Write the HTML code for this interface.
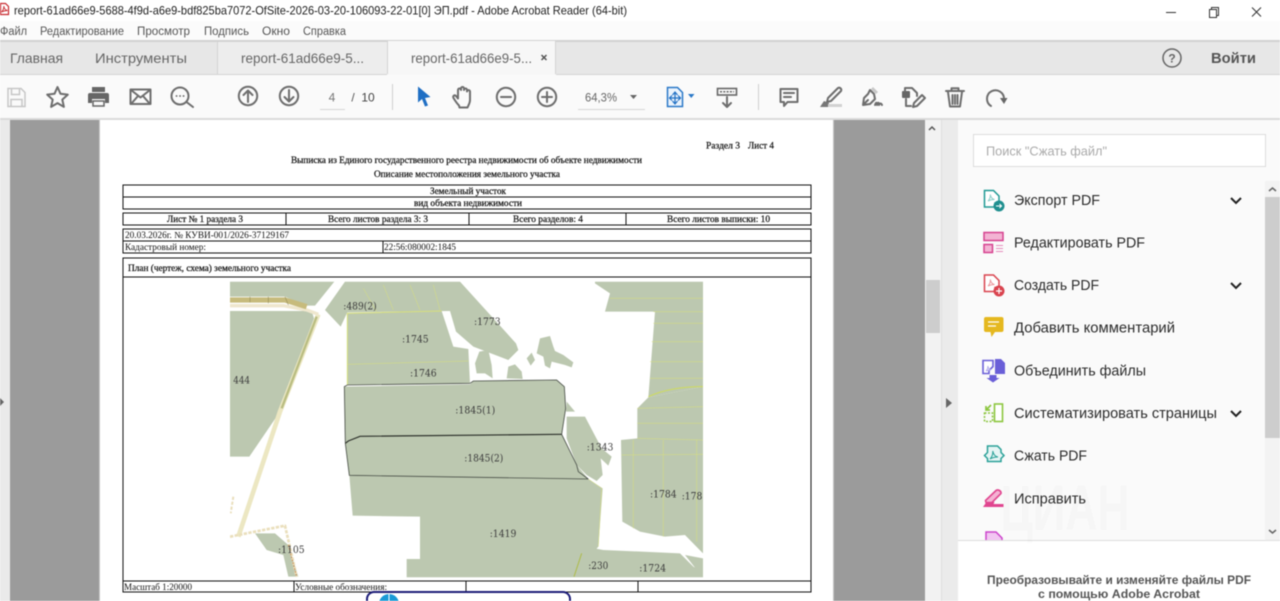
<!DOCTYPE html>
<html lang="ru">
<head>
<meta charset="utf-8">
<title>Adobe Acrobat Reader</title>
<style>
html,body{margin:0;padding:0;width:1280px;height:601px;overflow:hidden;background:#fff}
svg{display:block;filter:blur(.4px)}
text{font-family:"Liberation Sans","DejaVu Sans",sans-serif}
.ui{font-size:14px;fill:#666}
.menu{font-size:11.5px;fill:#555}
.side{font-size:14.5px;fill:#2c2c2c}
.p{font-family:"Liberation Serif","DejaVu Serif",serif;font-size:9px;fill:#111}
.b{stroke:#111;stroke-width:.22px}
.m{font-family:"DejaVu Serif","Liberation Serif",serif;font-size:10.5px;fill:#3c3c3c}
.ic{fill:none;stroke:#6e6e6e;stroke-width:2;stroke-linejoin:round;stroke-linecap:round}
.tb{fill:none;stroke:#111;stroke-width:1}
</style>
</head>
<body>
<svg width="1280" height="601" viewBox="0 0 1280 601" xmlns="http://www.w3.org/2000/svg">
<defs>
<clipPath id="mapc"><rect x="30" y="20" width="1419" height="887"/></clipPath>
<clipPath id="listc"><rect x="960" y="170" width="305" height="370"/></clipPath>
</defs>

<!-- chrome -->
<rect width="1280" height="21" fill="#fff"/>
<rect y="21" width="1280" height="19" fill="#fbfbfb"/>
<rect y="40" width="1280" height="2" fill="#d2d2d2"/>
<rect y="42" width="1280" height="32" fill="#e7e7e7"/>
<rect x="218" y="42" width="169" height="32" fill="#ededed"/>
<rect x="217" y="42" width="1" height="32" fill="#d4d4d4"/>
<rect x="387" y="41" width="169" height="34" fill="#f7f7f7"/>
<rect x="387" y="41" width="1" height="33" fill="#d4d4d4"/>
<rect x="555" y="41" width="1" height="33" fill="#d4d4d4"/>
<rect y="74" width="387" height="1" fill="#d4d4d4"/>
<rect x="556" y="74" width="724" height="1" fill="#d4d4d4"/>
<rect y="75" width="1280" height="43" fill="#fafafa"/>
<rect y="118" width="1280" height="2" fill="#dadada"/>

<!-- title bar -->
<path d="M0.5 3.500h5l3 3v8h-8z" fill="#fff" stroke="#c8282e" stroke-width="1.200"/>
<path d="M1.500 12c2-2 2.500-4 2.300-6 .3 2.500 1.500 4 3.700 4.500-2 0-4 .5-6 1.500z" fill="none" stroke="#c8282e" stroke-width=".9"/>
<text x="14" y="14.500" font-size="12" fill="#222" textLength="613" lengthAdjust="spacingAndGlyphs">report-61ad66e9-5688-4f9d-a6e9-bdf825ba7072-OfSite-2026-03-20-106093-22-01[0] ЭП.pdf - Adobe Acrobat Reader (64-bit)</text>
<rect x="1166" y="12" width="10" height="1" fill="#333"/>
<path d="M1209.500 9.500h7v8h-7zM1211.500 9.500v-2h7v8h-2" fill="#fff" stroke="#333" stroke-width="1"/>
<path d="M1252 7.500l9 9M1261 7.500l-9 9" stroke="#333" stroke-width="1" fill="none"/>

<!-- menu -->
<text class="menu" x="0" y="35" textLength="27" lengthAdjust="spacingAndGlyphs">Файл</text>
<text class="menu" x="40" y="35" textLength="84" lengthAdjust="spacingAndGlyphs">Редактирование</text>
<text class="menu" x="137" y="35" textLength="53" lengthAdjust="spacingAndGlyphs">Просмотр</text>
<text class="menu" x="204" y="35" textLength="45" lengthAdjust="spacingAndGlyphs">Подпись</text>
<text class="menu" x="262" y="35" textLength="28" lengthAdjust="spacingAndGlyphs">Окно</text>
<text class="menu" x="303" y="35" textLength="43" lengthAdjust="spacingAndGlyphs">Справка</text>

<!-- tabs -->
<text class="ui" x="10" y="63" textLength="53" lengthAdjust="spacingAndGlyphs">Главная</text>
<text class="ui" x="95" y="63" textLength="92" lengthAdjust="spacingAndGlyphs">Инструменты</text>
<text class="ui" x="241" y="63" textLength="123" lengthAdjust="spacingAndGlyphs">report-61ad66e9-5...</text>
<text class="ui" x="411" y="63" textLength="121" lengthAdjust="spacingAndGlyphs">report-61ad66e9-5...</text>
<path d="M541.500 55l5 5M546.500 55l-5 5" stroke="#555" stroke-width="1.500"/>
<circle cx="1172" cy="58" r="9" fill="none" stroke="#666" stroke-width="1.500"/>
<text x="1172" y="62.500" font-size="12" font-weight="bold" fill="#666" text-anchor="middle">?</text>
<text x="1211" y="63" font-size="15" font-weight="bold" fill="#555" textLength="45" lengthAdjust="spacingAndGlyphs">Войти</text>

<!-- toolbar left -->
<path d="M8 88.500h13l4 4v14H8zM11.500 88.500v6h8v-6M11 106.500v-7h11v7" fill="none" stroke="#c6c6c6" stroke-width="1.500"/>
<path class="ic" stroke-width="1.800" d="M57.500 87l3 6.800 7.300.8-5.500 5 1.600 7.300-6.400-3.800-6.400 3.800 1.600-7.300-5.500-5 7.300-.8z"/>
<path fill="#666" d="M92 87h13v5H92zM90 93h17a2 2 0 0 1 2 2v8h-4v-4H92v4h-4v-8a2 2 0 0 1 2-2z"/>
<rect x="93" y="101" width="11" height="5" fill="none" stroke="#666" stroke-width="1.500"/>
<rect x="130.500" y="89.500" width="20" height="14.500" class="ic" stroke-width="1.600"/>
<path class="ic" stroke-width="1.300" d="M131 90l9.500 7.500L150 90M131 104l7-8M150 104l-7-8"/>
<circle cx="180" cy="96" r="8.500" class="ic"/>
<path class="ic" stroke-width="2.400" d="M186.500 102l6.500 5"/>
<path d="M176.500 96h.1M180 96h.1M183.500 96h.1" stroke="#666" stroke-width="1.800" stroke-linecap="round"/>

<circle cx="248" cy="96" r="9.200" class="ic"/>
<path class="ic" d="M248 102v-11M243.500 95l4.500-4.500 4.500 4.500"/>
<circle cx="289" cy="96" r="9.200" class="ic"/>
<path class="ic" d="M289 90v11M284.500 97l4.500 4.500 4.500-4.500"/>
<text x="332" y="101.500" font-size="12" fill="#777" text-anchor="middle">4</text>
<rect x="320" y="109" width="25" height="1" fill="#d6d6d6"/>
<text x="353" y="101.500" font-size="12" fill="#555" text-anchor="middle">/</text>
<text x="368" y="101.500" font-size="12" fill="#444" text-anchor="middle">10</text>
<rect x="392" y="84" width="1" height="26" fill="#cfcfcf"/>

<path fill="#1f6fc4" d="M418 86.500l12.500 10.500-5.500 1 3 7.500-3 1-3-7.500-4 3.500z"/>
<path class="ic" stroke-width="1.600" d="M459 105.500c-2-2-4-5-5.500-7.500-1-2 1-3.500 2.500-2l2 2.500V90c0-2 3-2 3 0v-1.500c0-2 3-2 3 0V90c0-2 3-2 3 0v1.500c0-1.800 3-1.800 3 0V100c0 3-1.500 5-2.500 7.500h-8z"/>
<circle cx="506" cy="97" r="9.200" class="ic"/><path class="ic" d="M501 97h10"/>
<circle cx="547" cy="97" r="9.200" class="ic"/><path class="ic" d="M542 97h10M547 92v10"/>
<text x="585" y="101.500" font-size="12" fill="#666" textLength="32" lengthAdjust="spacingAndGlyphs">64,3%</text>
<path d="M630 95h7l-3.500 4z" fill="#666"/>
<rect x="578" y="109" width="67" height="1" fill="#d6d6d6"/>

<!-- toolbar right -->
<path d="M667.500 87.500h10l5 5v14h-15z" fill="#eaf3fc" stroke="#2a78c8" stroke-width="1.500"/>
<path d="M675 92v12M670 98h10M672.500 95l2.500-3 2.500 3M672.500 101l2.500 3 2.500-3M672 95.500l-2.500 2.500 2.500 2.500M678 95.500l2.500 2.500-2.500 2.500" fill="none" stroke="#1f6fc4" stroke-width="1.200"/>
<path d="M688 94h6.500l-3.250 4z" fill="#2a78c8"/>
<rect x="717.500" y="88.500" width="19" height="6.500" fill="none" stroke="#666" stroke-width="1.600"/>
<path d="M720 91.800h14" stroke="#666" stroke-width="1.500" stroke-dasharray="2 1.300"/>
<path class="ic" d="M727 97v9.500M723 103l4 4 4-4"/>
<rect x="758" y="84" width="1" height="26" fill="#cfcfcf"/>
<path class="ic" stroke-width="1.700" d="M780.500 89h17v13h-10l-3.500 4v-4h-3.500z"/>
<path class="ic" stroke-width="1.300" d="M784 93h10M784 97h7"/>
<path class="ic" stroke-width="1.600" d="M838 88c2-1 4 1 3 3l-10 10-4 1 1-4z"/>
<path fill="#777" d="M820 107l4-6 5 2-1 4z"/>
<rect x="828" y="104" width="14" height="3" fill="#d2d2d2"/>
<path class="ic" stroke-width="1.600" d="M870 90l4 4 1 5-5 5-7 1 1-7 4-4zM864 104l4-4"/>
<path d="M873 87l5 5-2 2-5-5z" fill="#c8c8c8"/>
<path class="ic" stroke-width="1.200" d="M875 105c1-3 2-3 2 0 1-3 2-3 2 0 1-2 2-2 3 0"/>
<rect x="902" y="91" width="8" height="7" rx="1" fill="#666"/>
<path class="ic" stroke-width="1.600" d="M905 91v-3h7l5 5v3M906 99v7h5"/>
<path class="ic" stroke-width="1.600" d="M913 107l1-4 8-8 3 3-8 8z"/>
<path class="ic" stroke-width="1.700" d="M948 92l2 14.500h10l2-14.500M946 91h18M951.500 91v-2.800h7V91"/>
<path class="ic" stroke-width="1.100" d="M952.500 95v9M955 95v9M957.500 95v9"/>
<path class="ic" stroke-width="2.200" d="M991 106A8.500 8.500 0 1 1 1004 99"/>
<path d="M1000 98h7.500l-3.500 6z" fill="#666"/>

<!-- document area -->
<rect y="120" width="1280" height="481" fill="#fff"/>
<rect x="0" y="120" width="10" height="481" fill="#eaeaea"/>
<path d="M0 398v8l4-4z" fill="#666"/>
<rect x="10" y="120" width="89" height="481" fill="#9b9b9b"/>
<rect x="99" y="120" width="1" height="481" fill="#c6c6c6"/>
<rect x="100" y="120" width="733" height="481" fill="#fff"/>
<rect x="833" y="120" width="92" height="481" fill="#9b9b9b"/>
<rect x="833" y="120" width="1" height="481" fill="#c4c4c4"/>
<rect x="925" y="120" width="16" height="481" fill="#f2f2f2"/>
<rect x="941" y="120" width="17" height="481" fill="#ebebeb"/>
<rect x="941" y="120" width="1" height="481" fill="#dedede"/>
<rect x="926" y="280" width="14" height="53" fill="#cdcdcd"/>
<path d="M929 130l3-3 3 3" fill="none" stroke="#555" stroke-width="1.500"/>
<path d="M946 398v10l6-5z" fill="#666"/>

<!-- pdf header text -->
<text class="p b" x="706" y="148.500" textLength="34" lengthAdjust="spacingAndGlyphs">Раздел 3</text>
<text class="p b" x="748" y="148.500" textLength="26" lengthAdjust="spacingAndGlyphs">Лист 4</text>
<text class="p b" x="291" y="163" textLength="351" lengthAdjust="spacingAndGlyphs">Выписка из Единого государственного реестра недвижимости об объекте недвижимости</text>
<text class="p b" x="374" y="177" textLength="186" lengthAdjust="spacingAndGlyphs">Описание местоположения земельного участка</text>

<!-- tables -->
<g class="tb" shape-rendering="crispEdges">
<rect x="123" y="185" width="688" height="24"/>
<path d="M123 197h688"/>
<rect x="123" y="213" width="688" height="12"/>
<path d="M286 213v12M469 213v12M626 213v12"/>
<rect x="123" y="229" width="688" height="24"/>
<path d="M123 241h688M383 241v12"/>
<rect x="123" y="258" width="688" height="334"/>
<path d="M123 277h688M123 581h688M294 581v11M466 581v11M638 581v11"/>
</g>
<text class="p b" x="430" y="194" textLength="76" lengthAdjust="spacingAndGlyphs">Земельный участок</text>
<text class="p b" x="414" y="206" textLength="108" lengthAdjust="spacingAndGlyphs">вид объекта недвижимости</text>
<text class="p b" x="167" y="222" textLength="76" lengthAdjust="spacingAndGlyphs">Лист № 1 раздела 3</text>
<text class="p b" x="328" y="222" textLength="100" lengthAdjust="spacingAndGlyphs">Всего листов раздела 3: 3</text>
<text class="p b" x="513" y="222" textLength="70" lengthAdjust="spacingAndGlyphs">Всего разделов: 4</text>
<text class="p b" x="667" y="222" textLength="103" lengthAdjust="spacingAndGlyphs">Всего листов выписки: 10</text>
<text class="p" x="125" y="238" textLength="164" lengthAdjust="spacingAndGlyphs">20.03.2026г. № КУВИ-001/2026-37129167</text>
<text class="p" x="125" y="250" textLength="81" lengthAdjust="spacingAndGlyphs">Кадастровый номер:</text>
<text class="p" x="384" y="250" textLength="72" lengthAdjust="spacingAndGlyphs">22:56:080002:1845</text>
<text class="p b" x="128" y="271" textLength="163" lengthAdjust="spacingAndGlyphs">План (чертеж, схема) земельного участка</text>
<text class="p" x="124" y="590" textLength="68" lengthAdjust="spacingAndGlyphs">Масштаб 1:20000</text>
<text class="p" x="295" y="590" textLength="92" lengthAdjust="spacingAndGlyphs">Условные обозначения:</text>

<!-- map -->
<g transform="translate(220 275) scale(.33333)" clip-path="url(#mapc)">
<g fill="#bcc8b0">
<path d="M30 20H343L285 92 255 92 195 65H30z"/>
<path d="M30 108H275L282 130 180 410 88 545H30z"/>
<path d="M375 20H720L888 205 895 225 865 255 760 215 708 170 690 108 382 112 362 155 315 105z"/>
<path d="M382 115L665 108 700 215 745 222 750 325 382 330z"/>
<path d="M373 335L750 328 760 318 1010 315 1033 335 1037 400 1025 478 420 484 376 505z"/>
<path d="M376 505L420 484 1025 478 1070 570 1105 612 388 601z"/>
<path d="M388 601L1105 612 1148 640 1135 815 1060 907H560V852H600V725L398 722z"/>
<path d="M1040 425L1095 425 1145 520 1175 545 1165 572 1142 550 1148 600 1130 618 1100 600 1070 570 1040 490z"/>
<path d="M1040 380L1065 410H1038z"/>
<path d="M765 265L778 230 805 225 815 270 818 310 795 295 770 295z"/>
<path d="M860 310L865 275 885 268 905 290 908 312z"/>
<path d="M920 250L935 233 945 255 932 272z"/>
<path d="M950 235L960 190 990 183 1000 215 1005 228 1030 240 1060 262 1055 277 1035 270 995 260 990 280 975 272 970 245z"/>
<path d="M1125 20H1449V335L1285 367 1305 110H1155L1170 55 1125 25z"/>
<path d="M1285 367L1449 335V835L1395 780 1335 785 1260 770 1207 740 1203 495 1252 490V400z"/>
<path d="M1060 907L1095 815 1150 825 1380 835 1420 875 1425 878 1395 840 1449 850V907z"/>
<path d="M105 775H165L205 810 235 905H205L190 840 140 825z"/>
</g>
<g fill="none" stroke="#d8e07c" stroke-width="1.500">
<path d="M382 330V115L665 108" stroke-width="3"/>
<path d="M382 268L745 258"/>
<path d="M1285 365C1340 340 1400 335 1449 335" stroke="#cfdc5c" stroke-width="3"/>
<path d="M1252 400L1449 395M1252 445L1449 445M1252 490L1449 495M1205 540L1449 538M1240 495V760M1330 495V785M1430 495V800M1300 110H1449M1300 145H1449M1295 200H1449M1290 260H1449M1290 310H1449M1170 70H1449"/>
<path d="M1135 815L1145 640 1105 612"/>
<path d="M430 40L470 110M490 30L520 105M570 30L600 105M640 30L660 105"/>
</g>
<path d="M1062 905L1085 835" stroke="#aebc48" stroke-width="3" fill="none"/>
<g fill="none" stroke-linejoin="round">
<path d="M295 118L180 410 55 785" stroke="#ece7c2" stroke-width="14"/>
<path d="M290 125L185 400" stroke="#b9bd82" stroke-width="7"/>
<path d="M30 92H190L260 105 295 118" stroke="#efe7ce" stroke-width="10"/>
<path d="M30 75H195L260 95" stroke="#c7bb7c" stroke-width="16"/>
<path d="M30 785L195 752 230 905" stroke="#eadfbc" stroke-width="8" stroke-dasharray="10 4"/>
<path d="M205 810L230 905" stroke="#c98a55" stroke-width="3" stroke-dasharray="5 4"/>
<path d="M40 665L32 715" stroke="#eadfbc" stroke-width="6" stroke-dasharray="10 5"/>
<path d="M90 65V82M145 65V85M195 65L205 90" stroke="#8a8450" stroke-width="1.500"/>
</g>
<g fill="none" stroke="#4a5048" stroke-width="2.500">
<path d="M750 325L382 330 373 335 376 505 388 601 1105 612M750 325L760 318 1010 315 1033 335 1037 400 1025 478 1070 570 1075 590 1105 612"/>
</g>
<path d="M376 505L385 498 420 484 1025 478" fill="none" stroke="#2c302a" stroke-width="3.500"/>
</g>
<g>
<text class="m" x="343.300" y="309.300" textLength="33.400" lengthAdjust="spacingAndGlyphs">:489(2)</text>
<text class="m" x="474" y="325" textLength="26.700" lengthAdjust="spacingAndGlyphs">:1773</text>
<text class="m" x="402" y="342.300" textLength="26.700" lengthAdjust="spacingAndGlyphs">:1745</text>
<text class="m" x="410" y="376.300" textLength="26.700" lengthAdjust="spacingAndGlyphs">:1746</text>
<text class="m" x="233.300" y="383.300" textLength="16.700" lengthAdjust="spacingAndGlyphs">444</text>
<text class="m" x="455.300" y="413.700" textLength="40" lengthAdjust="spacingAndGlyphs">:1845(1)</text>
<text class="m" x="464.300" y="461.300" textLength="39" lengthAdjust="spacingAndGlyphs">:1845(2)</text>
<text class="m" x="586.700" y="450.300" textLength="26.700" lengthAdjust="spacingAndGlyphs">:1343</text>
<text class="m" x="650" y="497.700" textLength="26.700" lengthAdjust="spacingAndGlyphs">:1784</text>
<text class="m" x="681.700" y="499.300" textLength="20.600" lengthAdjust="spacingAndGlyphs">:178</text>
<text class="m" x="489.700" y="537" textLength="26.700" lengthAdjust="spacingAndGlyphs">:1419</text>
<text class="m" x="278" y="553" textLength="26.700" lengthAdjust="spacingAndGlyphs">:1105</text>
<text class="m" x="588.300" y="569" textLength="20" lengthAdjust="spacingAndGlyphs">:230</text>
<text class="m" x="639.300" y="571.700" textLength="26.700" lengthAdjust="spacingAndGlyphs">:1724</text>
</g>
<!-- stamp -->
<path d="M367 602v-3a7 7 0 0 1 7-7h189a7 7 0 0 1 7 7v3" fill="#fff" stroke="#1c1c78" stroke-width="2"/>
<circle cx="389" cy="604" r="10" fill="#1a9ad6"/>
<path d="M389 594v10" stroke="#fff" stroke-width="1"/>

<!-- right panel -->
<rect x="958" y="120" width="322" height="481" fill="#fafafa"/>
<rect x="973.500" y="134.500" width="292" height="32" fill="#fff" stroke="#dcdcdc"/>
<text x="986" y="155.500" font-size="13" fill="#aaa" textLength="121" lengthAdjust="spacingAndGlyphs">Поиск "Сжать файл"</text>
<rect x="1265" y="181" width="15" height="359" fill="#f3f3f3"/>
<rect x="1265" y="197" width="15" height="241" fill="#cdcdcd"/>
<path d="M1269 191l3.500-3 3.500 3M1269 530l3.500 3 3.500-3" fill="none" stroke="#666" stroke-width="1.500"/>

<g clip-path="url(#listc)">
<text class="side" x="1014" y="205" textLength="86" lengthAdjust="spacingAndGlyphs">Экспорт PDF</text>
<text class="side" x="1014" y="247.500" textLength="131" lengthAdjust="spacingAndGlyphs">Редактировать PDF</text>
<text class="side" x="1014" y="290" textLength="85" lengthAdjust="spacingAndGlyphs">Создать PDF</text>
<text class="side" x="1014" y="332.500" textLength="161" lengthAdjust="spacingAndGlyphs">Добавить комментарий</text>
<text class="side" x="1014" y="375.500" textLength="132" lengthAdjust="spacingAndGlyphs">Объединить файлы</text>
<text class="side" x="1014" y="418" textLength="203" lengthAdjust="spacingAndGlyphs">Систематизировать страницы</text>
<text class="side" x="1014" y="460.500" textLength="73" lengthAdjust="spacingAndGlyphs">Сжать PDF</text>
<text class="side" x="1014" y="503.500" textLength="72" lengthAdjust="spacingAndGlyphs">Исправить</text>
<text class="side" x="1014" y="550" textLength="60" lengthAdjust="spacingAndGlyphs">Формы</text>
<!-- icon: export -->
<path d="M984.500 190.500h9l5.500 5.500v7h-4v4h-10.500z" fill="#fff" stroke="#1f9a94" stroke-width="1.500"/>
<path d="M988 201c2-2 2.500-4 2.300-6.500.4 2.500 1.700 4.500 4.200 5-2.300 0-4.500.5-6.500 1.500z" fill="none" stroke="#8ccfca" stroke-width="1"/>
<circle cx="999" cy="206" r="5.500" fill="#1f8f8f"/><path d="M996 206h5M999.500 204l2 2-2 2" stroke="#fff" fill="none" stroke-width="1.100"/>
<!-- icon: edit -->
<rect x="984" y="232.500" width="19" height="8" fill="#f3b3d3" stroke="#d6428f" stroke-width="1.500"/>
<rect x="984" y="244.500" width="8.500" height="8" fill="#f3b3d3" stroke="#d6428f" stroke-width="1.500"/>
<path d="M996 245.500h7M996 248.500h7M996 251.500h7" stroke="#e58cbc" stroke-width="1"/>
<!-- icon: create -->
<path d="M984.500 275h9l5.500 5.500v7h-4v4h-10.500z" fill="#fff" stroke="#d9434e" stroke-width="1.500"/>
<path d="M988 286c2-2 2.500-4 2.300-6.500.4 2.500 1.700 4.500 4.200 5-2.300 0-4.500.5-6.500 1.500z" fill="none" stroke="#eb9aa0" stroke-width="1"/>
<circle cx="999" cy="291" r="5.500" fill="#d9434e"/><path d="M996 291h6M999 288v6" stroke="#fff" stroke-width="1.200"/>
<!-- icon: comment -->
<path d="M986 317h15.500a2 2 0 0 1 2 2v11a2 2 0 0 1-2 2H995l-3.500 5-1-5H986a2 2 0 0 1-2-2v-11a2 2 0 0 1 2-2z" fill="#e5b81f"/>
<path d="M988 322h11M988 326h8" stroke="#fff" stroke-width="1.300"/>
<!-- icon: combine -->
<path d="M983 360.500h10v6l-4 4v3h-6z" fill="#fff" stroke="#6a5fd8" stroke-width="1.600"/>
<path d="M986 371c1.500-1.500 2-3 1.800-5 .4 2 1.300 3.500 3.200 4-1.800 0-3.500.3-5 1z" fill="none" stroke="#b3adec" stroke-width="1"/>
<path d="M995 359h6l4 4v11h-10z" fill="#6a5fd8"/>
<path d="M989.500 375h7v3h3l-6.500 4.500-6.500-4.500h3z" fill="#6a5fd8"/>
<!-- icon: organize -->
<rect x="994.500" y="404" width="8" height="17.500" fill="#fff" stroke="#8cc63f" stroke-width="1.600"/>
<rect x="984.500" y="413" width="8" height="8.500" fill="none" stroke="#8cc63f" stroke-width="1.500" stroke-dasharray="2 1.500"/>
<path d="M991 405l-5 5M986 406v4h4" fill="none" stroke="#8cc63f" stroke-width="1.700"/>
<!-- icon: compress -->
<path d="M987.500 446h10l3.500 3.500v3l3 3-3 3v3h-13.500v-3l-3-3 3-3z" fill="#e6f5f4" stroke="#2aa198" stroke-width="1.500"/>
<path d="M990 459c2.500-2.500 3-5 2.800-8 .5 3 2 5.500 5.200 6-3 0-5.500.5-8 2z" fill="none" stroke="#2aa198" stroke-width="1"/>
<!-- icon: fix -->
<path d="M996 490.500c2-1.500 5.500 .5 5 3l-9 9h-6l-.5-2z" fill="#f4b3d3" stroke="#e0458f" stroke-width="1.600"/>
<path d="M983 507l3.500-5h8l-1 2h10v3z" fill="#e0458f"/>
<!-- icon: fill -->
<path d="M986 532h10l6 6v8h-16z" fill="#f2c6f2" stroke="#cc44cc" stroke-width="1.500"/>
</g>
<path d="M1231 198l5 5 5-5M1231 283l5 5 5-5M1231 411l5 5 5-5" fill="none" stroke="#222" stroke-width="2"/>

<!-- bottom promo -->
<rect x="958" y="540" width="322" height="1" fill="#dedede"/>
<rect x="958" y="541" width="322" height="60" fill="#fff"/>
<text x="1119" y="584" font-size="11.500" font-weight="bold" fill="#555" text-anchor="middle" textLength="264" lengthAdjust="spacingAndGlyphs">Преобразовывайте и изменяйте файлы PDF</text>
<text x="1119" y="598" font-size="11.500" font-weight="bold" fill="#555" text-anchor="middle" textLength="162" lengthAdjust="spacingAndGlyphs">с помощью Adobe Acrobat</text>
<text x="1000" y="530" font-size="64" font-weight="bold" fill="#000" opacity=".01" textLength="130" lengthAdjust="spacingAndGlyphs">ЦИАН</text>
</svg>
</body>
</html>
